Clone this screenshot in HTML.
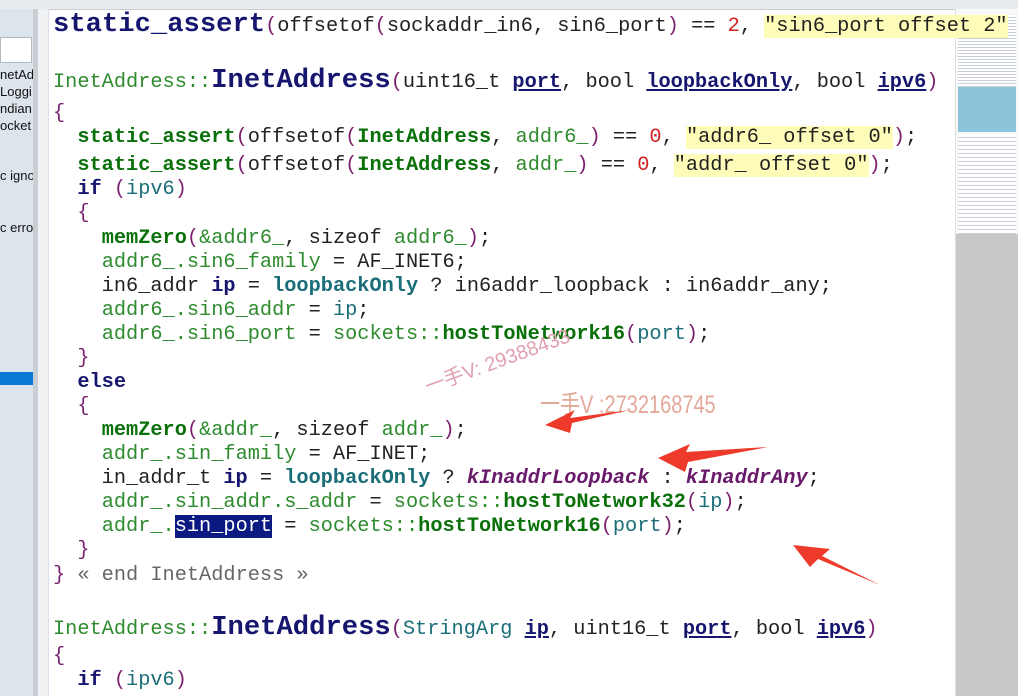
<!DOCTYPE html>
<html><head><meta charset="utf-8"><style>
body{margin:0;width:1018px;height:696px;overflow:hidden;background:#fff;position:relative;font-family:"Liberation Mono","DejaVu Sans Mono",monospace;}
.top{position:absolute;left:0;top:0;width:1018px;height:9px;background:#e9ecef;border-bottom:1px solid #c8ccd2}
.left{position:absolute;left:0;top:9px;width:33px;height:687px;background:#dce4ec;font-family:"Liberation Sans",sans-serif;font-size:13px;color:#111;overflow:hidden}
.left div{position:absolute;left:0;white-space:nowrap}
.gap{position:absolute;left:33px;top:9px;width:5px;height:687px;background:#c9ced4}
.frame{position:absolute;left:38px;top:9px;width:10px;height:687px;background:#f0f1f3;border-right:1px solid #dde}
.mini{position:absolute;left:955px;top:9px;width:63px;height:687px;background:#f8f8f8;border-left:1px solid #ddd}
.l{position:absolute;left:53px;font-size:20.3px;line-height:24px;white-space:pre;color:#222}
.b{font-weight:bold}
.nv{color:#16166f;font-weight:bold}
.big{font-size:27.2px;color:#16166f;font-weight:bold}
.g{color:#2e8b2e}
.fg{color:#0a700a;font-weight:bold}
.t{color:#1b6e78}
.tu{color:#16166f;font-weight:bold;text-decoration:underline}
.p{color:#7b1f6e}
.r{color:#d02020}
.s{background:#fdfcb8;color:#222}
.k{color:#6a1a6a;font-weight:bold;font-style:italic}
.c{color:#666}
.sel{background:#0a1a80;color:#fff}
.wm{position:absolute;font-family:"Liberation Sans","Noto Sans CJK SC",sans-serif;color:#e0a0b0}
</style></head><body>
<div class="top"></div>
<div class="left">
<div style="left:0;top:28px;width:30px;height:24px;background:#fff;border:1px solid #b0b8c0"></div>
<div style="top:58px">netAd</div>
<div style="top:75px">Loggi</div>
<div style="top:92px">ndian</div>
<div style="top:109px">ocket</div>
<div style="top:159px">c igno</div>
<div style="top:211px">c erro</div>
<div style="top:363px;width:33px;height:13px;background:#0a78d4"></div>
</div>
<div class="gap"></div>
<div class="frame"></div>
<div class="mini">
<div style="position:absolute;left:2px;top:6px;width:58px;height:75px;background:repeating-linear-gradient(#fff 0 2px,#c8cfd8 2px 3px)"></div>
<div style="position:absolute;left:2px;top:78px;width:58px;height:45px;background:#8cc4dc"></div>
<div style="position:absolute;left:2px;top:125px;width:58px;height:105px;background:repeating-linear-gradient(#fff 0 3px,#ccd 3px 4px)"></div>
<div style="position:absolute;left:0;top:225px;width:63px;height:462px;background:#c8c8c8"></div>
</div>

<div class="l" style="top:13px"><span class="big">static_assert</span><span class="p">(</span>offsetof<span class="p">(</span>sockaddr_in6, sin6_port<span class="p">)</span> == <span class="r">2</span>, <span class="s">"sin6_port offset 2"</span></div>
<div class="l" style="top:69px"><span class="g">InetAddress::</span><span class="big">InetAddress</span><span class="p">(</span>uint16_t <span class="tu">port</span>, bool <span class="tu">loopbackOnly</span>, bool <span class="tu">ipv6</span><span class="p">)</span></div>
<div class="l" style="top:102px"><span class="p">{</span></div>
<div class="l" style="top:126px">  <span class="fg">static_assert</span><span class="p">(</span>offsetof<span class="p">(</span><span class="fg">InetAddress</span>, <span class="g">addr6_</span><span class="p">)</span> == <span class="r">0</span>, <span class="s">"addr6_ offset 0"</span><span class="p">)</span>;</div>
<div class="l" style="top:154px">  <span class="fg">static_assert</span><span class="p">(</span>offsetof<span class="p">(</span><span class="fg">InetAddress</span>, <span class="g">addr_</span><span class="p">)</span> == <span class="r">0</span>, <span class="s">"addr_ offset 0"</span><span class="p">)</span>;</div>
<div class="l" style="top:178px">  <span class="nv">if</span> <span class="p">(</span><span class="t">ipv6</span><span class="p">)</span></div>
<div class="l" style="top:202px">  <span class="p">{</span></div>
<div class="l" style="top:227px">    <span class="fg">memZero</span><span class="p">(</span><span class="g">&amp;addr6_</span>, sizeof <span class="g">addr6_</span><span class="p">)</span>;</div>
<div class="l" style="top:251px">    <span class="g">addr6_.sin6_family</span> = AF_INET6;</div>
<div class="l" style="top:275px">    in6_addr <span class="nv">ip</span> = <span class="t b">loopbackOnly</span> ? in6addr_loopback : in6addr_any;</div>
<div class="l" style="top:299px">    <span class="g">addr6_.sin6_addr</span> = <span class="t">ip</span>;</div>
<div class="l" style="top:323px">    <span class="g">addr6_.sin6_port</span> = <span class="g">sockets::</span><span class="fg">hostToNetwork16</span><span class="p">(</span><span class="t">port</span><span class="p">)</span>;</div>
<div class="l" style="top:347px">  <span class="p">}</span></div>
<div class="l" style="top:371px">  <span class="nv">else</span></div>
<div class="l" style="top:395px">  <span class="p">{</span></div>
<div class="l" style="top:419px">    <span class="fg">memZero</span><span class="p">(</span><span class="g">&amp;addr_</span>, sizeof <span class="g">addr_</span><span class="p">)</span>;</div>
<div class="l" style="top:443px">    <span class="g">addr_.sin_family</span> = AF_INET;</div>
<div class="l" style="top:467px">    in_addr_t <span class="nv">ip</span> = <span class="t b">loopbackOnly</span> ? <span class="k">kInaddrLoopback</span> : <span class="k">kInaddrAny</span>;</div>
<div class="l" style="top:491px">    <span class="g">addr_.sin_addr.s_addr</span> = <span class="g">sockets::</span><span class="fg">hostToNetwork32</span><span class="p">(</span><span class="t">ip</span><span class="p">)</span>;</div>
<div class="l" style="top:515px">    <span class="g">addr_.</span><span class="sel">sin_port</span> = <span class="g">sockets::</span><span class="fg">hostToNetwork16</span><span class="p">(</span><span class="t">port</span><span class="p">)</span>;</div>
<div class="l" style="top:539px">  <span class="p">}</span></div>
<div class="l" style="top:564px"><span class="p">}</span> <span class="c">« end InetAddress »</span></div>
<div class="l" style="top:616px"><span class="g">InetAddress::</span><span class="big">InetAddress</span><span class="p">(</span><span class="t">StringArg</span> <span class="tu">ip</span>, uint16_t <span class="tu">port</span>, bool <span class="tu">ipv6</span><span class="p">)</span></div>
<div class="l" style="top:645px"><span class="p">{</span></div>
<div class="l" style="top:669px">  <span class="nv">if</span> <span class="p">(</span><span class="t">ipv6</span><span class="p">)</span></div>

<div class="wm" style="left:420px;top:372px;font-size:20px;transform:rotate(-20deg);transform-origin:left top;">一手V: 29388433</div>
<div class="wm" style="left:540px;top:385px;font-size:25px;transform:scaleX(0.8);transform-origin:left top;color:#e4a89a">一手V :2732168745</div>

<svg style="position:absolute;left:0;top:0" width="1018" height="696">
<g fill="#ee3a2a">
<polygon points="545,425 575,410 570,418 630,410 572,423 570,433"/>
<polygon points="658,458 690,444 686,452 768,447 688,462 685,472"/>
<polygon points="793,545 830,549 822,556 880,585 818,559 810,567"/>
</g>
</svg>
</body></html>
